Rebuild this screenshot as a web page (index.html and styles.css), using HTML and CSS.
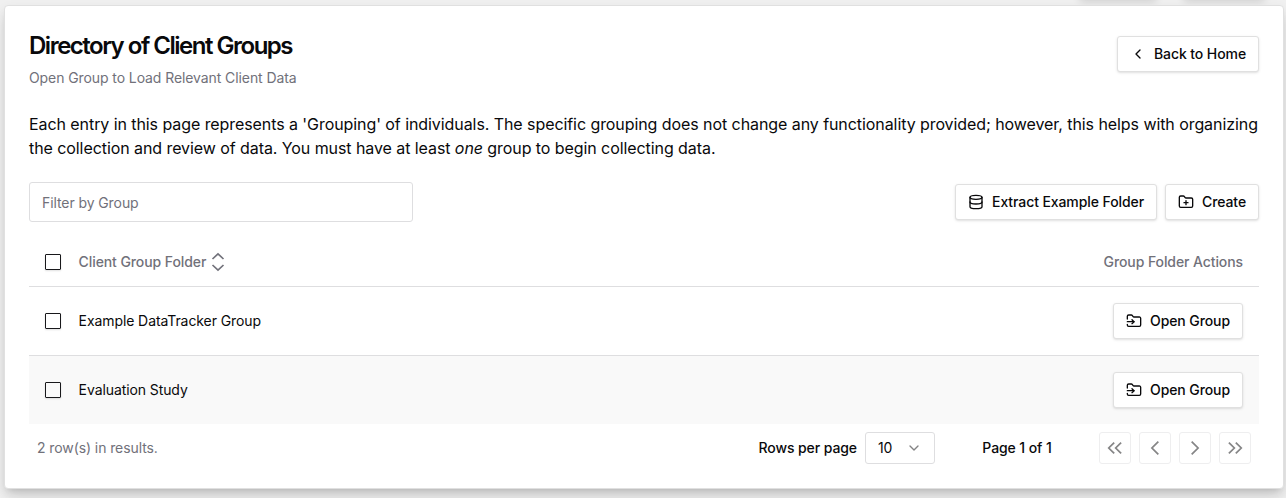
FILE: index.html
```html
<!DOCTYPE html>
<html lang="en">
<head>
<meta charset="utf-8">
<title>Directory of Client Groups</title>
<link rel="stylesheet" href="styles.css">
</head>
<body>
<div class="nav-shadow nav-shadow-a"></div>
<div class="nav-shadow nav-shadow-b"></div>
<main class="card">
  <header class="card-header">
    <div class="heading">
      <h1 class="title">Directory of Client Groups</h1>
      <p class="subtitle">Open Group to Load Relevant Client Data</p>
    </div>
    <button class="btn btn-back"><svg class="icon" viewBox="0 0 24 24"><path d="m15 18-6-6 6-6"/></svg>Back to Home</button>
  </header>
  <p class="intro">Each entry in this page represents a 'Grouping' of individuals. The specific grouping does not change any functionality provided; however, this helps with organizing the collection and review of data. You must have at least <i>one</i> group to begin collecting data.</p>
  <div class="toolbar">
    <input class="filter" type="text" placeholder="Filter by Group">
    <div class="actions">
      <button class="btn btn-extract"><svg class="icon" viewBox="0 0 24 24"><ellipse cx="12" cy="5" rx="9" ry="3"/><path d="M3 5v14a9 3 0 0 0 18 0V5"/><path d="M3 12a9 3 0 0 0 18 0"/></svg>Extract Example Folder</button>
      <button class="btn btn-create"><svg class="icon" viewBox="0 0 24 24"><path d="M12 10v6"/><path d="M9 13h6"/><path d="M20 20a2 2 0 0 0 2-2V8a2 2 0 0 0-2-2h-7.9a2 2 0 0 1-1.69-.9L9.6 3.9A2 2 0 0 0 7.93 3H4a2 2 0 0 0-2 2v13a2 2 0 0 0 2 2Z"/></svg>Create</button>
    </div>
  </div>
  <section class="table">
    <div class="row row-head">
      <span class="check"></span>
      <span class="cell">Client Group Folder<svg class="sort" viewBox="0 0 24 24"><path d="m5.4 8.4 6.6-6.2 6.6 6.2"/><path d="m5.4 15.6 6.6 6.2 6.6-6.2"/></svg></span>
      <span>Group Folder Actions</span>
    </div>
    <div class="row">
      <span class="check"></span>
      <span class="cell">Example DataTracker Group</span>
      <button class="btn btn-open"><svg class="icon" viewBox="0 0 24 24"><path d="M2 9V5a2 2 0 0 1 2-2h3.9a2 2 0 0 1 1.69.9l.81 1.2a2 2 0 0 0 1.67.9H20a2 2 0 0 1 2 2v10a2 2 0 0 1-2 2H4a2 2 0 0 1-2-2v-1"/><path d="M2 13h10"/><path d="m9 16 3-3-3-3"/></svg>Open Group</button>
    </div>
    <div class="row row-alt">
      <span class="check"></span>
      <span class="cell">Evaluation Study</span>
      <button class="btn btn-open"><svg class="icon" viewBox="0 0 24 24"><path d="M2 9V5a2 2 0 0 1 2-2h3.9a2 2 0 0 1 1.69.9l.81 1.2a2 2 0 0 0 1.67.9H20a2 2 0 0 1 2 2v10a2 2 0 0 1-2 2H4a2 2 0 0 1-2-2v-1"/><path d="M2 13h10"/><path d="m9 16 3-3-3-3"/></svg>Open Group</button>
    </div>
  </section>
  <footer class="pagination">
    <span class="results">2 row(s) in results.</span>
    <span class="label">Rows per page</span>
    <div class="select">10<svg class="icon chevron" viewBox="0 0 24 24"><path d="m6 9 6 6 6-6"/></svg></div>
    <span class="page-label">Page 1 of 1</span>
    <div class="pager">
      <button class="pager-btn"><svg viewBox="0 0 15 15"><path d="M6.9 3.4 2.8 7.5l4.1 4.1M12.1 3.4 8 7.5l4.1 4.1"/></svg></button>
      <button class="pager-btn"><svg viewBox="0 0 15 15"><path d="M10 2.7 5.2 7.5l4.8 4.8"/></svg></button>
      <button class="pager-btn"><svg viewBox="0 0 15 15"><path d="M5 2.7l4.8 4.8L5 12.3"/></svg></button>
      <button class="pager-btn"><svg viewBox="0 0 15 15"><path d="M2.9 3.4 7 7.5l-4.1 4.1M8.1 3.4l4.1 4.1-4.1 4.1"/></svg></button>
    </div>
  </footer>
</main>
</body>
</html>
```
FILE: styles.css
```css
* { box-sizing: border-box; }
body {
  margin: 0;
  height: 498px;
  padding: 5px 2px 0 4px;
  overflow: hidden;
  background: #f0f0f0;
  color: #09090b;
  font: 400 14px/20px Inter, "Liberation Sans", sans-serif;
  letter-spacing: -.09px;
}
h1, p { margin: 0; }
svg { fill: none; stroke: currentColor; stroke-linecap: round; stroke-linejoin: round; flex: none; }
.nav-shadow {
  position: absolute;
  top: -12px;
  height: 10px;
  box-shadow: 0 3px 8px rgba(0, 0, 0, .16);
}
.nav-shadow-a { left: 1080px; width: 76px; }
.nav-shadow-b { left: 1184px; width: 80px; }
.card {
  position: relative;
  width: 1280px;
  height: 484px;
  padding: 24px;
  border: 1px solid #e0e0e0;
  border-radius: 4px;
  background: #fff;
  box-shadow: 0 10px 15px -3px rgba(0, 0, 0, .12), 0 4px 6px -4px rgba(0, 0, 0, .12), 0 4px 12px rgba(0, 0, 0, .07);
}
.card-header { display: flex; align-items: center; justify-content: space-between; height: 58px; }
.title { margin-bottom: 6px; font-size: 24px; line-height: 32px; font-weight: 600; letter-spacing: -1.49px; }
.subtitle { color: #71717a; }
.btn {
  display: inline-flex;
  align-items: center;
  justify-content: center;
  gap: 8px;
  height: 36px;
  padding: 0 12px;
  border: 1px solid #e0e0e0;
  border-radius: 3px;
  background: #fff;
  box-shadow: 0 1px 3px rgba(0, 0, 0, .1), 0 1px 2px -1px rgba(0, 0, 0, .1);
  color: #09090b;
  font: 500 14px/20px Inter, "Liberation Sans", sans-serif;
  letter-spacing: -.09px;
  white-space: nowrap;
}
.icon { width: 16px; height: 16px; stroke-width: 2; }
.btn-back { width: 142px; margin-bottom: 10px; }
.btn-extract { width: 202px; }
.btn-create { width: 94px; }
.btn-open { width: 130px; }
.intro { margin-top: 24px; margin-right: -4px; font-size: 16px; line-height: 24px; letter-spacing: -.074px; }
.toolbar { display: flex; align-items: center; justify-content: space-between; margin: 22px 0 16px; }
.filter {
  width: 384px;
  height: 40px;
  padding: 1px 12px 0;
  border: 1px solid #dedee0;
  border-radius: 3px;
  background: #fff;
  font: inherit;
  letter-spacing: -.09px;
}
.filter::placeholder { color: #71717a; opacity: 1; }
.actions { display: flex; gap: 8px; }
.row { display: flex; align-items: center; height: 69px; padding: 0 16px; border-bottom: 1px solid #dedee0; }
.row-head { height: 49px; color: #71717a; font-weight: 500; }
.row-alt { height: 68px; border: 0; background: #f9f9f9; }
.check {
  width: 16px;
  height: 16px;
  margin-right: 17.6px;
  border: 1px solid #18181b;
  border-radius: 1px;
  box-shadow: 0 1px 2px rgba(0, 0, 0, .12);
}
.cell { display: flex; align-items: center; flex: 1; }
.sort { width: 20px; height: 20px; margin-left: 1.4px; stroke-width: 2; stroke-linecap: butt; stroke-linejoin: miter; }
.pagination { display: flex; align-items: center; height: 32px; margin-top: 8px; padding: 0 8px; font-weight: 500; }
.results { flex: 1; color: #71717a; font-weight: 400; }
.select {
  display: flex;
  align-items: center;
  justify-content: space-between;
  width: 70px;
  height: 32px;
  margin-left: 8px;
  padding: 0 12px;
  border: 1px solid #dedee0;
  border-radius: 3px;
  font-weight: 400;
}
.chevron { opacity: .5; }
.page-label { width: 100px; margin: 0 32px; text-align: center; }
.pager { display: flex; gap: 8px; }
.pager-btn {
  display: flex;
  align-items: center;
  justify-content: center;
  width: 32px;
  height: 32px;
  padding: 0;
  border: 1px solid #eeeeef;
  border-radius: 3px;
  background: #fff;
  color: #858586;
}
.pager-btn svg { width: 20px; height: 20px; stroke-width: 1.3; stroke-linecap: butt; stroke-linejoin: miter; }
```
